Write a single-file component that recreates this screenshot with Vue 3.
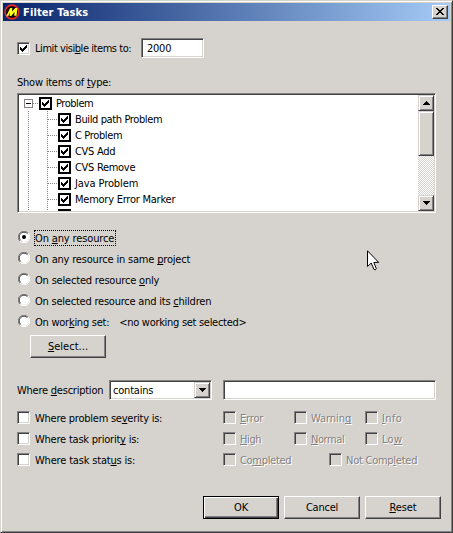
<script setup>
import { h } from 'vue'

const ctx = document.createElement('canvas').getContext('2d')

// Label with an "&" mnemonic marker, tracked so that it spans `w` pixels.
const Txt = (props) => {
  const bold = props.bold
  const plain = props.t.replace('&', '')
  ctx.font = `${bold ? 'bold ' : ''}11px "DejaVu Sans Condensed", "DejaVu Sans", sans-serif`
  const spacing = (props.w - 0.8 - ctx.measureText(plain).width) / plain.length
  const i = props.t.indexOf('&')
  const kids = i < 0 ? [plain] : [plain.slice(0, i), h('u', plain[i]), plain.slice(i + 1)]
  return h('span', { class: ['txt', { bold }], style: { letterSpacing: spacing.toFixed(3) + 'px' } }, kids)
}
Txt.props = { t: String, w: Number, bold: Boolean }

const types = [
  ['Build path Problem', 88],
  ['C Problem', 48],
  ['CVS Add', 41],
  ['CVS Remove', 61],
  ['Java Problem', 64],
  ['Memory Error Marker', 101],
  ['Runtime Alert', 66],
]
const scopes = [
  ['On &any resource', 80],
  ['On any resource in same &project', 156],
  ['On selected resource &only', 125],
  ['On selected resource and its &children', 177],
  ['On wor&king set:', 75],
]
const filters = [
  { t: 'Where problem se&verity is:', w: 128, opts: [['&Error', 24], ['Warnin&g', 41], ['&Info', 21]] },
  { t: 'Where task priorit&y is:', w: 105, opts: [['&High', 22], ['&Normal', 34], ['Lo&w', 21]] },
  { t: 'Where task stat&us is:', w: 101, wide: true, opts: [['Co&mpleted', 52], ['Not Comp&leted', 72]] },
]
const check = 'M0 2h1v1h1v1h1v-1h1v-1h1v-1h1v-1h1v3h-1v1h-1v1h-1v1h-1v1h-1v-1h-1v-1h-1z'
</script>

<template>
  <div class="window">
    <header class="titlebar">
      <svg class="logo" width="16" height="16" viewBox="0 0 16 16">
        <circle cx="8" cy="8" r="6.9" fill="#180808" stroke="#e3282b" stroke-width="1.6" />
        <path d="M2.2 12.2 6.2 4 8.2 4 8 7.5 11.2 4 13.4 4 12.6 11.8 10.2 11.8 10.6 8 7.2 12 5.6 12 5.8 8.4 4.2 12.2z" fill="#ffff18" />
      </svg>
      <Txt t="Filter Tasks" :w="66" bold />
      <button class="close" aria-label="Close">
        <svg width="8" height="7" viewBox="0 0 8 7" shape-rendering="crispEdges"><path d="M0 0h2v1h1v1h2v-1h1v-1h2v1h-1v1h-1v1h-1v1h1v1h1v1h1v1h-2v-1h-1v-1h-2v1h-1v1h-2v-1h1v-1h1v-1h1v-1h-1v-1h-1v-1h-1z" /></svg>
      </button>
    </header>

    <main class="body">
      <div class="limit">
        <span class="box"><svg width="7" height="7" shape-rendering="crispEdges"><path :d="check" /></svg></span>
        <Txt t="Limit visi&ble items to:" :w="97" />
        <div class="field small"><Txt t="2000" :w="25" /></div>
      </div>

      <div class="caption"><Txt t="Show items of &type:" :w="95" /></div>

      <div class="list">
        <div class="tree">
          <div class="node root">
            <span class="expander"></span><span class="dash"></span>
            <span class="tbox"><svg width="7" height="7" shape-rendering="crispEdges"><path :d="check" /></svg></span>
            <Txt t="Problem" :w="38" />
          </div>
          <div v-for="n in types" :key="n[0]" class="node child">
            <span class="trunk"></span><span class="trunk inner"></span><span class="dash"></span>
            <span class="tbox"><svg width="7" height="7" shape-rendering="crispEdges"><path :d="check" /></svg></span>
            <Txt :t="n[0]" :w="n[1]" />
          </div>
        </div>
        <div class="scroll">
          <span class="sbtn"><svg width="7" height="4" shape-rendering="crispEdges"><path d="M3 0h1v1h1v1h1v1h1v1H0V3h1V2h1V1h1z" /></svg></span>
          <span class="thumb"></span>
          <span class="sbtn down"><svg width="7" height="4" shape-rendering="crispEdges"><path d="M0 0h7v1H6v1H5v1H4v1H3V3H2V2H1V1H0z" /></svg></span>
        </div>
      </div>

      <div class="scopes">
        <div v-for="(s, i) in scopes" :key="s[0]" class="scope">
          <svg class="radio" width="12" height="12" viewBox="0 0 12 12">
            <circle cx="6" cy="6" r="5" fill="#fff" />
            <path d="M1.9 10.1A5.5 5.5 0 0 1 10.1 1.9" fill="none" stroke="#848284" />
            <path d="M2.6 9.4A4.6 4.6 0 0 1 9.4 2.6" fill="none" stroke="#424142" />
            <path d="M10.1 1.9A5.5 5.5 0 0 1 1.9 10.1" fill="none" stroke="#fff" />
            <circle v-if="i === 0" cx="6" cy="6" r="2" />
          </svg>
          <span class="scope-label" :class="{ focus: i === 0 }"><Txt :t="s[0]" :w="s[1]" /></span>
          <span v-if="i === 4" class="setname"><Txt t="<no working set selected>" :w="128" /></span>
        </div>
      </div>
      <button class="btn select"><Txt t="&Select..." :w="41" /></button>

      <div class="describe">
        <span class="describe-label"><Txt t="Where &description" :w="87" /></span>
        <div class="combo">
          <Txt t="contains" :w="41" />
          <span class="sbtn drop"><svg width="7" height="4" shape-rendering="crispEdges"><path d="M0 0h7v1H6v1H5v1H4v1H3V3H2V2H1V1H0z" /></svg></span>
        </div>
        <div class="field large"></div>
      </div>

      <div v-for="f in filters" :key="f.t" class="filter">
        <div class="filter-name"><span class="box"></span><Txt :t="f.t" :w="f.w" /></div>
        <div class="options" :class="{ wide: f.wide }">
          <div v-for="o in f.opts" :key="o[0]" class="option"><span class="box off"></span><Txt :t="o[0]" :w="o[1]" /></div>
        </div>
      </div>

      <footer class="actions">
        <button class="btn default"><Txt t="OK" :w="15" /></button>
        <button class="btn"><Txt t="Cancel" :w="33" /></button>
        <button class="btn"><Txt t="&Reset" :w="28" /></button>
      </footer>
    </main>

    <svg class="cursor" width="13" height="21" viewBox="0 0 13 21">
      <path d="M.5 .8V16.5L4.2 13 7 19.5Q8.5 20.5 9.3 18.7L6.8 12.4H11.7z" fill="#fff" stroke="#000" />
    </svg>
  </div>
</template>

<style>
body { margin: 0; background: #d6d3ce; }
.txt {
  font: 11px/13px "DejaVu Sans Condensed", "DejaVu Sans", sans-serif;
  white-space: pre;
}
.txt.bold { font-weight: bold; }
.txt u { text-decoration: underline 1px; text-underline-offset: 1px; text-decoration-skip-ink: none; }
</style>

<style scoped>
* { box-sizing: border-box; }
.window {
  position: relative;
  width: 453px;
  height: 533px;
  background: #d6d3ce;
  border: 1px solid;
  border-color: #d6d3ce #424142 #424142 #d6d3ce;
  box-shadow: inset 1px 1px #fff, inset -1px -1px #848284;
  padding: 2px;
  color: #000;
}
.titlebar {
  display: flex;
  align-items: center;
  height: 18px;
  padding: 0 2px 0 1px;
  color: #fff;
  background: linear-gradient(90deg, #08246b, #a5cbf7);
}
.logo { margin-right: 3px; }
.close {
  display: flex;
  align-items: center;
  justify-content: center;
  width: 16px;
  height: 14px;
  margin-left: auto;
  padding: 0 1px 1px 0;
  border: 1px solid;
  border-color: #fff #424142 #424142 #fff;
  box-shadow: inset -1px -1px #848284;
  background: #d6d3ce;
}
.body { padding: 17px 0 0 14px; }
.limit { display: flex; align-items: center; height: 20px; }
.box {
  display: flex;
  align-items: center;
  justify-content: center;
  flex: none;
  width: 13px;
  height: 13px;
  margin-right: 5px;
  background: #fff;
  border: 1px solid;
  border-color: #848284 #fff #fff #848284;
  box-shadow: inset 1px 1px #424142, inset -1px -1px #d6d3ce;
}
.box.off { background: #d6d3ce; margin-right: 4px; }
.field {
  display: flex;
  align-items: center;
  height: 20px;
  padding-left: 5px;
  background: #fff;
  border: 1px solid;
  border-color: #848284 #fff #fff #848284;
  box-shadow: inset 1px 1px #424142, inset -1px -1px #d6d3ce;
}
.small { width: 63px; margin-left: 9.8px; }
.large { width: 213px; margin-left: 11px; }
.caption { display: flex; height: 35px; padding-top: 18px; }
.list {
  display: flex;
  width: 419px;
  height: 120px;
  padding: 1px;
  background: #fff;
  border: 1px solid;
  border-color: #848284 #fff #fff #848284;
  box-shadow: inset 1px 1px #424142, inset -1px -1px #d6d3ce;
}
.tree { flex: 1; height: 116px; padding-left: 5px; overflow: hidden; }
.node { display: flex; align-items: center; height: 16px; }
.expander {
  width: 9px;
  height: 9px;
  border: 1px solid #848284;
  background: linear-gradient(#000, #000) center / 5px 1px no-repeat #fff;
}
.dash { height: 1px; background: repeating-linear-gradient(90deg, #848284 0 1px, #fff 1px 2px); }
.root .dash { width: 6px; }
.child .dash { width: 10px; }
.trunk {
  width: 1px;
  height: 16px;
  margin-left: 4px;
  background: repeating-linear-gradient(#848284 0 1px, #fff 1px 2px);
}
.trunk.inner { margin-left: 18px; }
.tbox {
  display: flex;
  align-items: center;
  justify-content: center;
  flex: none;
  width: 13px;
  height: 13px;
  margin-right: 4px;
  border: 2px solid #000;
}
.scroll {
  display: flex;
  flex-direction: column;
  width: 16px;
  background: conic-gradient(#fff 25%, #d6d3ce 0 50%, #fff 0 75%, #d6d3ce 0) 0 0 / 2px 2px;
}
.sbtn, .thumb {
  display: flex;
  align-items: center;
  justify-content: center;
  width: 16px;
  height: 16px;
  background: #d6d3ce;
  border: 1px solid;
  border-color: #d6d3ce #424142 #424142 #d6d3ce;
  box-shadow: inset 1px 1px #fff, inset -1px -1px #848284;
}
.thumb { height: 45px; }
.down { margin-top: auto; }
.scopes { padding-top: 14px; }
.scope { display: flex; align-items: center; height: 21px; }
.radio { margin: 0 4px 2px 1px; }
.scope-label { display: flex; padding: 2px 2px 1px 1px; }
.focus { outline: 1px dotted #000; outline-offset: -1px; }
.setname { display: flex; padding-top: 1px; margin-left: 8px; }
.btn {
  display: flex;
  align-items: center;
  justify-content: center;
  width: 76px;
  height: 23px;
  padding: 0 0 1px;
  color: #000;
  background: #d6d3ce;
  border: 1px solid;
  border-color: #fff #424142 #424142 #fff;
  box-shadow: inset -1px -1px #848284;
}
.default { border-color: #000; box-shadow: inset 1px 1px #fff, inset -1px -1px #424142, inset -2px -2px #848284; }
.select { margin: 3px 0 0 13px; }
.describe { display: flex; align-items: center; height: 20px; margin: 22px 0 7px; }
.describe-label { display: flex; width: 92px; padding-top: 1px; }
.combo {
  display: flex;
  align-items: center;
  justify-content: space-between;
  width: 103px;
  height: 20px;
  padding: 1px 1px 1px 3px;
  background: #fff;
  border: 1px solid;
  border-color: #848284 #fff #fff #848284;
  box-shadow: inset 1px 1px #424142, inset -1px -1px #d6d3ce;
}
.filter { display: flex; height: 21px; align-items: center; }
.filter-name { display: flex; align-items: center; width: 206px; }
.filter .txt { padding-top: 2px; }
.options { display: grid; grid-template-columns: repeat(3, 71px); }
.options.wide { grid-template-columns: repeat(2, 106px); }
.option { display: flex; align-items: center; color: #848284; text-shadow: 1px 1px #fff; }
.actions { display: flex; gap: 5px; padding: 26px 0 0 186px; }
.cursor { position: absolute; left: 366px; top: 249px; }
</style>
